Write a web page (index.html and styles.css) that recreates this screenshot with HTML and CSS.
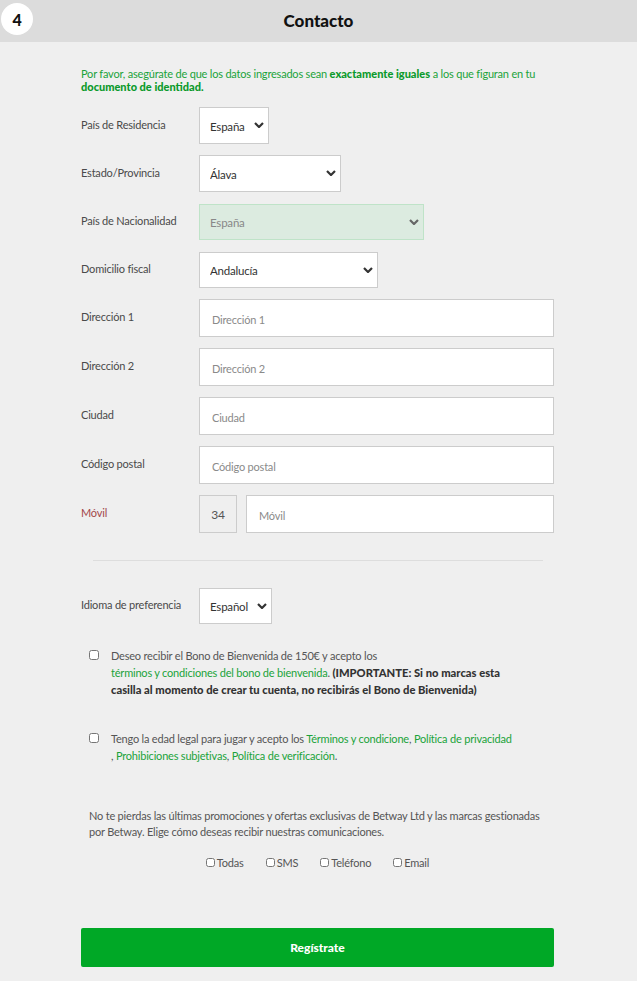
FILE: index.html
```html
<!DOCTYPE html>
<html lang="es">
<head>
<meta charset="utf-8">
<title>Contacto</title>
<link rel="stylesheet" href="styles.css">
</head>
<body>

<div class="header">
  <span class="step">4</span>
  <h2>Contacto</h2>
</div>

<div class="content">
  <p class="intro">Por favor, asegúrate de que los datos ingresados sean <b>exactamente iguales</b> a los que figuran en tu <b>documento de identidad.</b></p>

  <div class="row sel">
    <label>País de Residencia</label>
    <div class="select-wrap w70">
      <select><option>España</option></select>
      <svg class="chev" viewBox="0 0 10 6"><path d="M1 1l4 4 4-4"/></svg>
    </div>
  </div>

  <div class="row sel">
    <label>Estado/Provincia</label>
    <div class="select-wrap w142">
      <select><option>Álava</option></select>
      <svg class="chev" viewBox="0 0 10 6"><path d="M1 1l4 4 4-4"/></svg>
    </div>
  </div>

  <div class="row sel">
    <label>País de Nacionalidad</label>
    <div class="select-wrap w225 disabled">
      <select disabled><option>España</option></select>
      <svg class="chev" viewBox="0 0 10 6"><path d="M1 1l4 4 4-4"/></svg>
    </div>
  </div>

  <div class="row sel">
    <label>Domicilio fiscal</label>
    <div class="select-wrap w179">
      <select><option>Andalucía</option></select>
      <svg class="chev" viewBox="0 0 10 6"><path d="M1 1l4 4 4-4"/></svg>
    </div>
  </div>

  <div class="row">
    <label>Dirección 1</label>
    <input type="text" placeholder="Dirección 1">
  </div>

  <div class="row">
    <label>Dirección 2</label>
    <input type="text" placeholder="Dirección 2">
  </div>

  <div class="row">
    <label>Ciudad</label>
    <input type="text" placeholder="Ciudad">
  </div>

  <div class="row">
    <label>Código postal</label>
    <input type="text" placeholder="Código postal">
  </div>

  <div class="row">
    <label class="error">Móvil</label>
    <span class="prefix">34</span>
    <input type="text" placeholder="Móvil">
  </div>

  <hr>

  <div class="row sel">
    <label>Idioma de preferencia</label>
    <div class="select-wrap w73">
      <select><option>Español</option></select>
      <svg class="chev" viewBox="0 0 10 6"><path d="M1 1l4 4 4-4"/></svg>
    </div>
  </div>

  <div class="check first">
    <input type="checkbox">
    <p>Deseo recibir el Bono de Bienvenida de 150€ y acepto los <a>términos y condiciones del bono de bienvenida</a>. <b>(IMPORTANTE: Si no marcas esta casilla al momento de crear tu cuenta, no recibirás el Bono de Bienvenida)</b></p>
  </div>

  <div class="check second">
    <input type="checkbox">
    <p>Tengo la edad legal para jugar y acepto los <a>Términos y condicione</a>, <a>Política de privacidad</a><br>, <a>Prohibiciones subjetivas</a>, <a>Política de verificación</a>.</p>
  </div>

  <p class="promo">No te pierdas las últimas promociones y ofertas exclusivas de Betway Ltd y las marcas gestionadas por Betway. Elige cómo deseas recibir nuestras comunicaciones.</p>

  <div class="channels">
    <label><input type="checkbox">Todas</label>
    <label><input type="checkbox">SMS</label>
    <label><input type="checkbox">Teléfono</label>
    <label><input type="checkbox">Email</label>
  </div>

  <button class="submit">Regístrate</button>
</div>

</body>
</html>
```

FILE: styles.css
```css
body {
  margin: 0;
  background: #efefef;
  font-family: Lato, "Open Sans", sans-serif;
  color: #555;
  font-size: 11px;
  letter-spacing: -0.2px;
}

.header {
  position: relative;
  height: 42px;
  background: #dcdcdc;
  display: flex;
  align-items: center;
  justify-content: center;
}

.header h2 {
  margin: 0;
  font-size: 17px;
  font-weight: 900;
  color: #111;
  letter-spacing: 0;
  padding-bottom: 2px;
}

.step {
  position: absolute;
  left: 1px;
  top: 3px;
  width: 32px;
  height: 32px;
  border-radius: 50%;
  background: #fff;
  display: flex;
  align-items: center;
  justify-content: center;
  font-weight: 900;
  font-size: 16px;
  color: #111;
}

.content {
  width: 473px;
  margin: 0 auto 0 81px;
  padding-top: 25px;
}

.intro {
  margin: 0 0 14px;
  color: #1aa33a;
  line-height: 13px;
  font-size: 11px;
}

.intro b {
  color: #0b9a2b;
  font-weight: 900;
  letter-spacing: 0;
}

.row {
  display: flex;
  align-items: center;
  height: 38px;
  margin-bottom: 11px;
}

.row.sel {
  height: 37px;
}

.row label {
  width: 118px;
  flex: none;
  padding-bottom: 3px;
  color: #4a4a4a;
}

.row label.error {
  color: #a2474a;
}

.select-wrap {
  position: relative;
  height: 37px;
}

.w70 { width: 70px; }
.w73 { width: 73px; height: 36px; }
.w142 { width: 142px; }
.w179 { width: 179px; height: 36px; }
.w225 { width: 225px; height: 36px; }

select {
  -webkit-appearance: none;
  appearance: none;
  width: 100%;
  height: 100%;
  box-sizing: border-box;
  border: 1px solid #ccc;
  background: #fff;
  padding: 2px 0 0 10px;
  font-family: Lato, "Open Sans", sans-serif;
  font-size: 11.5px;
  letter-spacing: -0.2px;
  color: #333;
  border-radius: 0;
  outline: none;
}

.select-wrap.disabled select {
  background: #dcebe0;
  border-color: #bfe3c8;
  color: #888;
  opacity: 1;
}

.chev {
  position: absolute;
  right: 5px;
  top: 15px;
  width: 10px;
  height: 6px;
  fill: none;
  stroke: #333;
  stroke-width: 2.2;
}

.select-wrap.disabled .chev {
  stroke: #666;
}

input[type="text"] {
  flex: 1;
  height: 38px;
  box-sizing: border-box;
  border: 1px solid #ccc;
  background: #fff;
  padding: 2px 0 0 12px;
  font-family: Lato, "Open Sans", sans-serif;
  font-size: 11px;
  letter-spacing: -0.2px;
  outline: none;
}

input::placeholder {
  color: #8a8a8a;
}

.prefix {
  width: 38px;
  height: 38px;
  box-sizing: border-box;
  border: 1px solid #ccc;
  display: flex;
  align-items: center;
  justify-content: center;
  margin-right: 9px;
  color: #555;
  font-size: 12px;
}

hr {
  border: 0;
  border-top: 1px solid #ddd;
  margin: 27px 11px 26px 12px;
}

.check {
  display: flex;
  align-items: flex-start;
  margin-left: 8px;
}

.check input {
  width: 10px;
  height: 10px;
  margin: 3px 12px 0 0;
  flex: none;
}

.check p {
  margin: 0;
  width: 410px;
  line-height: 17px;
  color: #555;
}

.check a {
  color: #1aa33a;
  white-space: nowrap;
}

.check b {
  color: #333;
  font-weight: 900;
  font-size: 11.2px;
  letter-spacing: 0;
}

.check.first {
  margin-top: 23px;
}

.check.second {
  margin-top: 32px;
}

.check.second p {
  width: 440px;
}

.promo {
  margin: 44px 4px 0 8px;
  line-height: 16px;
  font-size: 11px;
  color: #555;
}

.channels {
  display: flex;
  justify-content: center;
  gap: 22px;
  margin-top: 16px;
  font-size: 11px;
  color: #555;
}

.channels label {
  display: flex;
  align-items: center;
}

.channels input {
  width: 9px;
  height: 9px;
  margin: 0 2px 0 0;
}

.submit {
  display: block;
  width: 100%;
  height: 39px;
  margin-top: 59px;
  border: 0;
  border-radius: 2px;
  background: #00a826;
  color: #fff;
  font-family: Lato, "Open Sans", sans-serif;
  font-weight: 900;
  font-size: 12px;
}
```
